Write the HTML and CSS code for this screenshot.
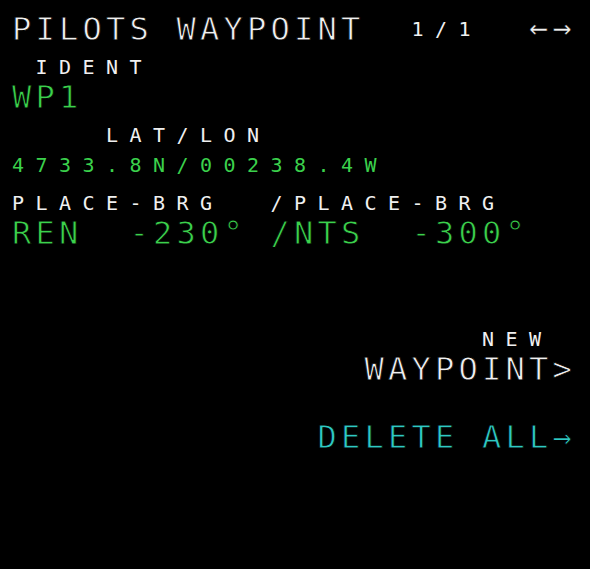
FILE: index.html
```html
<!DOCTYPE html>
<html lang="en">
<head>
    <meta charset="UTF-8">
    <meta name="viewport" content="width=device-width, initial-scale=1.0">
    <title>MCDU - Pilots Waypoint</title>
    <link rel="stylesheet" href="styles.css">
</head>
<body>
    <div class="mcdu-screen">
        <!-- title line -->
        <div class="row"><span class="big white">PILOTS WAYPOINT  </span><span class="small white">1/1  </span><span class="arrows white">←→</span></div>

        <div class="row label"><span class="small white"> IDENT</span></div>
        <div class="row"><span class="big green">WP1</span></div>

        <div class="row label"><span class="small white">    LAT/LON</span></div>
        <div class="row"><span class="small green">4733.8N/00238.4W</span></div>

        <div class="row label"><span class="small white">PLACE-BRG  /PLACE-BRG</span></div>
        <div class="row"><span class="big green">REN  -230° /NTS  -300°</span></div>

        <div class="row label"></div>
        <div class="row"></div>

        <div class="row label right"><span class="small white">NEW </span></div>
        <div class="row right"><span class="big white">WAYPOINT&gt;</span></div>

        <div class="row label"></div>
        <div class="row right"><span class="big cyan">DELETE ALL→</span></div>

        <!-- scratchpad -->
        <div class="row scratchpad"></div>
    </div>
</body>
</html>
```

FILE: styles.css
```css
/* 24 columns x 14 lines, each cell 23.5px wide, 34px high */
body {
    margin: 0;
    padding: 0;
    background: #000;
    width: 590px;
    height: 569px;
    overflow: hidden;
}

.mcdu-screen {
    width: 564px;
    padding: 12px 0 0 12px;
    font-family: "DejaVu Sans Mono", "Liberation Mono", monospace;
}

.row {
    display: flex;
    height: 34px;
    line-height: 34px;
    white-space: pre;
}

.row.label {
    padding-top: 8px;
    height: 26px;
    line-height: 26px;
}

.row.right {
    justify-content: flex-end;
}

/* large font: 32px glyph advance 19.26px + spacing = 23.5px cell */
.big {
    font-size: 32px;
    letter-spacing: 4.24px;
    -webkit-text-stroke: 0.8px #000;
}

/* small font: 20px glyph advance 12.04px + spacing = 23.5px cell */
.small {
    font-size: 20px;
    letter-spacing: 11.46px;
}

.arrows {
    font-size: 31px;
    letter-spacing: 4.84px;
    position: relative;
    top: -2px;
    -webkit-text-stroke: 0.4px #000;
}

.white {
    color: #f0f0f0;
}

.green {
    color: #3bd14c;
}

.cyan {
    color: #2ec9c3;
}
```
